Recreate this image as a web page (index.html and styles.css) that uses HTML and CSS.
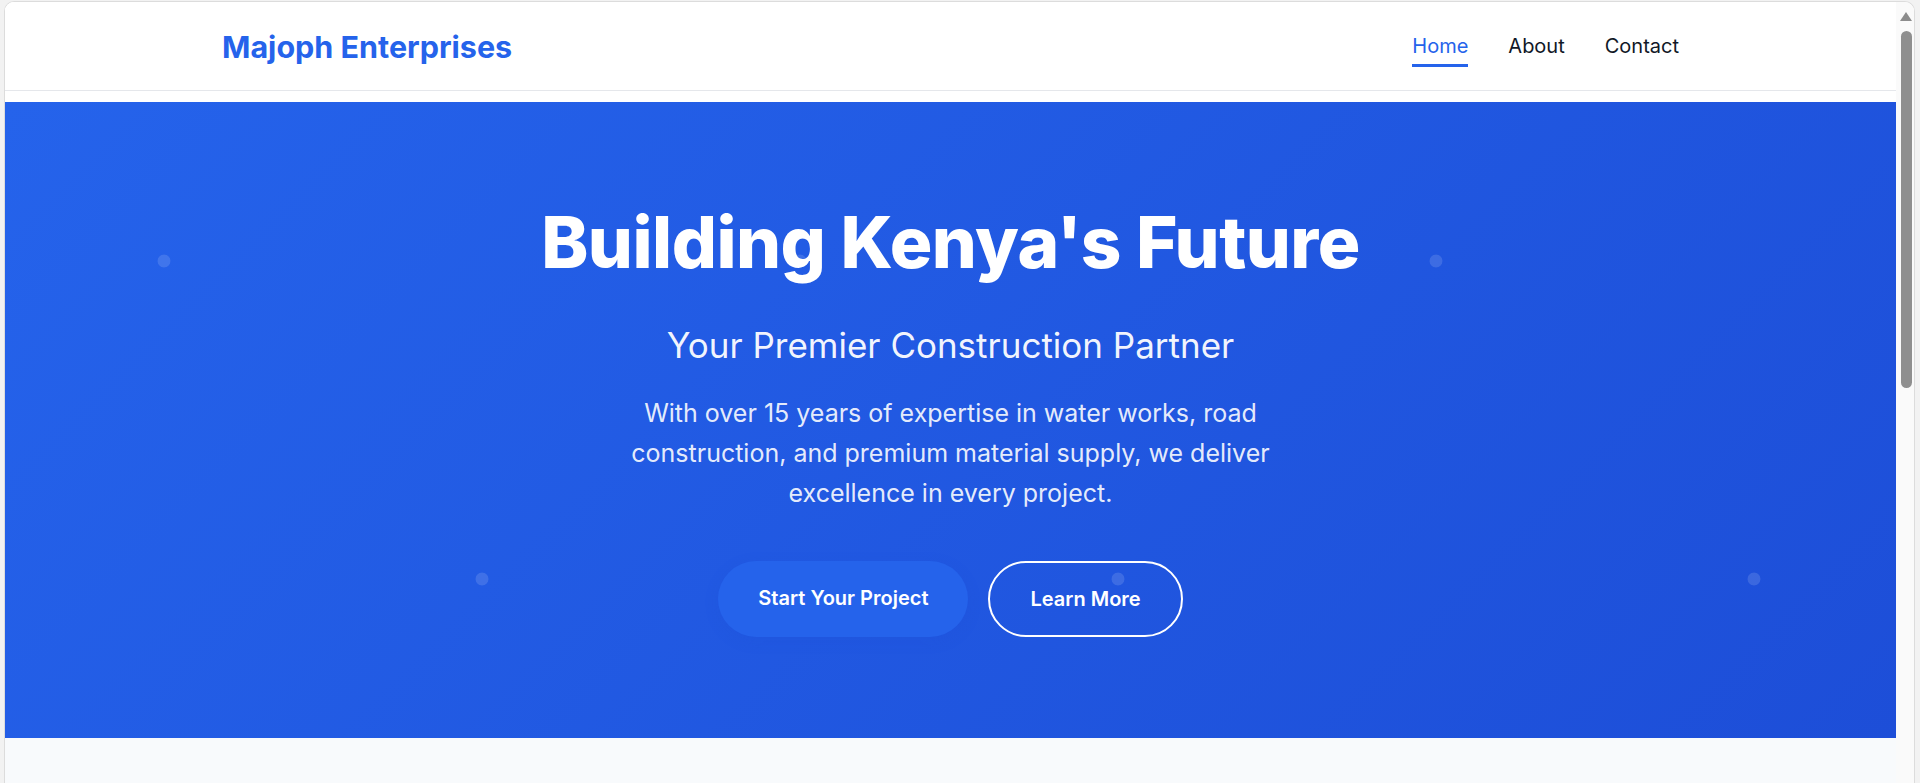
FILE: index.html
```html
<!DOCTYPE html>
<html lang="en">
<head>
<meta charset="utf-8">
<title>Majoph Enterprises</title>
<link rel="stylesheet" href="styles.css">
</head>
<body>
<div class="window">
  <div class="page">
    <header class="site-header">
      <div class="container header-inner">
        <a class="logo" href="#">Majoph Enterprises</a>
        <nav class="nav">
          <a class="nav-link active" href="#">Home</a>
          <a class="nav-link" href="#">About</a>
          <a class="nav-link" href="#">Contact</a>
        </nav>
      </div>
    </header>
    <main class="main">
      <section class="hero">
        <div class="hero-content">
          <h1 class="hero-title">Building Kenya's Future</h1>
          <h2 class="hero-subtitle">Your Premier Construction Partner</h2>
          <p class="hero-text">With over 15 years of expertise in water works, road construction, and premium material supply, we deliver excellence in every project.</p>
          <div class="hero-actions">
            <a class="btn btn-primary" href="#">Start Your Project</a>
            <a class="btn btn-outline" href="#">Learn More</a>
          </div>
        </div>
      </section>
      <section class="next-section"></section>
    </main>
  </div>
  <div class="scrollbar">
    <div class="scroll-arrow"></div>
    <div class="scroll-thumb"></div>
  </div>
</div>
</body>
</html>
```

FILE: styles.css
```css
* { box-sizing: border-box; }

html, body {
  margin: 0;
  padding: 0;
  height: 100%;
  overflow: hidden;
}

body {
  background: #f2f2f2;
  font-family: Inter, "Noto Sans", "Liberation Sans", sans-serif;
}

.window {
  margin: 1px 5px 0 4px;
  height: 782px;
  border: 1px solid #dcdcdc;
  border-bottom: none;
  border-radius: 10px 10px 0 0;
  background: #ffffff;
  overflow: hidden;
  display: flex;
}

.page {
  flex: 1;
  display: flex;
  flex-direction: column;
  background: #ffffff;
  min-width: 0;
}

.site-header {
  height: 89px;
  border-bottom: 1px solid #e5e7eb;
  background: #ffffff;
  flex-shrink: 0;
}

.container {
  max-width: 1457px;
  margin: 0 auto;
}

.header-inner {
  height: 100%;
  display: flex;
  align-items: center;
  justify-content: space-between;
}

.logo {
  font-size: 30.5px;
  font-weight: 700;
  color: #2563eb;
  text-decoration: none;
}

.nav {
  display: flex;
  gap: 40px;
  padding-top: 8px;
}

.nav-link {
  font-size: 20px;
  color: #111827;
  text-decoration: none;
  padding-bottom: 6px;
  border-bottom: 3px solid transparent;
}

.nav-link.active {
  color: #2563eb;
  border-bottom-color: #2563eb;
}

.main {
  flex: 1;
  display: flex;
  flex-direction: column;
  padding-top: 11px;
  background: #ffffff;
}

.hero {
  height: 636px;
  flex-shrink: 0;
  display: flex;
  align-items: center;
  justify-content: center;
  background-image:
    radial-gradient(circle at 25% 25%, rgba(255,255,255,0.13) 6px, rgba(255,255,255,0) 6.8px),
    radial-gradient(circle at 75% 75%, rgba(255,255,255,0.13) 6px, rgba(255,255,255,0) 6.8px),
    linear-gradient(135deg, #2563eb 0%, #1d4ed8 100%);
  background-size: 636px 636px, 636px 636px, 100% 100%;
  background-position: 0 0, 0 0, 0 0;
  color: #ffffff;
}

.hero-content {
  display: flex;
  flex-direction: column;
  align-items: center;
  text-align: center;
}

.hero-title {
  margin: 0;
  font-size: 71px;
  line-height: 1.1;
  font-weight: 800;
  letter-spacing: -0.5px;
}

.hero-subtitle {
  margin: 39px 0 0;
  font-size: 35px;
  line-height: 1.4;
  font-weight: 400;
  color: rgba(255,255,255,0.95);
}

.hero-text {
  margin: 23px 0 0;
  max-width: 672px;
  font-size: 25px;
  line-height: 1.6;
  color: rgba(255,255,255,0.9);
}

.hero-actions {
  margin-top: 48px;
  display: flex;
  gap: 20px;
}

.btn {
  display: block;
  font-size: 20px;
  line-height: 28px;
  font-weight: 600;
  color: #ffffff;
  text-decoration: none;
  border-radius: 40px;
}

.btn-primary {
  padding: 23px 40px 25px;
  background: #2563eb;
  box-shadow: 0 4px 14px rgba(29, 78, 216, 0.2);
}

.btn-outline {
  padding: 22px 40px;
  border: 2px solid #ffffff;
}

.next-section {
  flex: 1;
  background: #f8fafc;
}

.scrollbar {
  width: 18px;
  flex-shrink: 0;
  background: #fafafa;
  display: flex;
  flex-direction: column;
  align-items: center;
  padding-top: 10px;
}

.scroll-arrow {
  width: 0;
  height: 0;
  border-left: 6px solid transparent;
  border-right: 6px solid transparent;
  border-bottom: 9px solid #8c8c8c;
  margin-left: 2px;
}

.scroll-thumb {
  margin-top: 10px;
  margin-left: 2px;
  width: 11px;
  height: 357px;
  border-radius: 6px;
  background: #8f8f8f;
}
```
